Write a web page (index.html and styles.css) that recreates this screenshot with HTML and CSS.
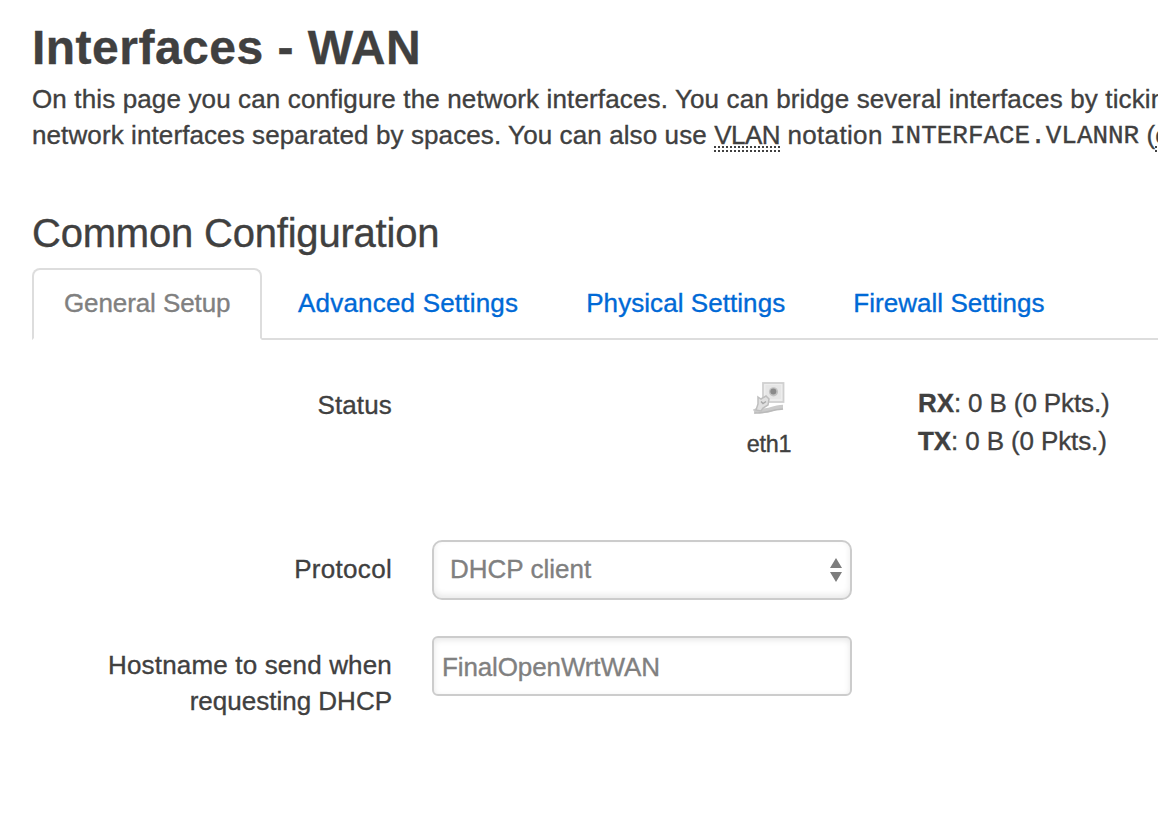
FILE: index.html
```html
<!DOCTYPE html>
<html lang="en">
<head>
<meta charset="utf-8">
<title>Interfaces - WAN</title>
<link rel="stylesheet" href="styles.css">
</head>
<body>
<main class="page">
  <h1 class="title">Interfaces - WAN</h1>
  <p class="intro">
    <span class="intro-line intro-first">On this page you can configure the network interfaces. You can bridge several interfaces by tickin</span>
    <span class="intro-line intro-second">network interfaces separated by spaces. You can also use <span class="abbr">VLAN</span> <span class="word">notation</span> <code class="code">INTERFACE.VLANNR</code> (<span class="abbr">e</span></span>
  </p>
  <h2 class="section-title">Common Configuration</h2>
  <ul class="tabs">
    <li class="tab tab-active">General Setup</li>
    <li class="tab tab-advanced">Advanced Settings</li>
    <li class="tab tab-physical">Physical Settings</li>
    <li class="tab tab-firewall">Firewall Settings</li>
  </ul>
  <div class="row row-status">
    <div class="label">Status</div>
    <div class="status">
      <div class="device">
        <svg class="device-icon" width="32" height="34" viewBox="0 0 32 34">
          <rect x="10" y="3" width="20.500" height="19" fill="#ededed" stroke="#d0d0d0" stroke-width="1.800"/>
          <rect x="12.500" y="5" width="15.500" height="14" fill="#e6e6e6"/>
          <circle cx="20.500" cy="11.800" r="4.600" fill="#c2c2c2"/>
          <circle cx="20.300" cy="11.400" r="3" fill="#8a8a8a"/>
          <path d="M1 31.500C7 28 10 32 16 30S25 27 30 27" fill="none" stroke="#cbcbcb" stroke-width="4.500"/>
          <path d="M1 33C8 33.500 14 32 20 30.500S26 30 30 29" fill="none" stroke="#bababa" stroke-width="1.500"/>
          <path d="M5 17l3 2 5-3 3 3-1 6-5 3-2 3-5-1 2-6z" fill="#e0e0e0" stroke="#bebebe" stroke-width="1.500"/>
          <path d="M8 21.500l2 2 3-2" fill="none" stroke="#a8a8a8" stroke-width="1.500"/>
        </svg>
        <span class="device-name">eth1</span>
      </div>
      <div class="traffic">
        <div class="traffic-line"><b>RX</b>: 0 B (0 Pkts.)</div>
        <div class="traffic-line"><b>TX</b>: 0 B (0 Pkts.)</div>
      </div>
    </div>
  </div>
  <div class="row row-protocol">
    <div class="label">Protocol</div>
    <div class="field select">
      <span>DHCP client</span>
      <svg class="arrows" width="12" height="24" viewBox="0 0 12 24"><path d="M0 10L6 0l6 10zM0 14h12L6 24z" fill="#7d7d7d"/></svg>
    </div>
  </div>
  <div class="row row-host">
    <div class="label"><span class="label-first">Hostname to send when</span><br>requesting DHCP</div>
    <div class="field input">FinalOpenWrtWAN</div>
  </div>
</main>
</body>
</html>
```
FILE: styles.css
```css
* { box-sizing: border-box; }
body {
  margin: 0;
  background: #fff;
  color: #404040;
  font-family: "Liberation Sans", Arial, sans-serif;
  font-size: 26px;
  line-height: 36px;
  overflow: hidden;
  -webkit-text-stroke: .35px currentColor;
}
.page {
  height: 818px;
  padding: 13px 0 0 32px;
  overflow: hidden;
  white-space: nowrap;
}
.title { margin: 0; font-size: 48px; line-height: 70px; letter-spacing: .48px; }
.intro { margin: -2px 0 0; }
.intro-line { display: block; height: 36px; }
.intro-first { letter-spacing: .135px; }
.intro-second { letter-spacing: .1px; }
.word { letter-spacing: .35px; }
.abbr {
  letter-spacing: -.5px;
  border-bottom: 2px dotted #404040;
  text-decoration: underline dotted 2px #404040;
  text-decoration-skip-ink: none;
  text-underline-offset: 2px;
}
.code {
  font-family: "Liberation Mono", monospace;
  font-size: 26px;
  line-height: 1;
  letter-spacing: -.03px;
  vertical-align: 1px;
}
.section-title { margin: 44px 0 0; font-size: 40px; font-weight: 400; line-height: 72px; letter-spacing: -.2px; }
.tabs {
  display: flex;
  gap: 4px;
  margin: -1px 0 0;
  padding: 0;
  height: 72px;
  list-style: none;
  border-bottom: 2px solid #ddd;
}
.tab {
  height: 72px;
  padding: 15px 30px 0;
  border: 2px solid transparent;
  color: #0069d6;
}
.tab-active {
  width: 230px;
  background: #fff;
  color: #808080;
  border-color: #ddd;
  border-bottom-color: #fff;
  border-radius: 8px 8px 0 0;
  letter-spacing: -.1px;
}
.tab-advanced { letter-spacing: .2px; }
.tab-physical { letter-spacing: .06px; }
.tab-firewall { letter-spacing: .04px; }
.row { display: flex; gap: 40px; }
.label { width: 360px; text-align: right; }
.row-status { height: 164px; margin-top: 36px; padding-top: 11px; }
.row-status .label { letter-spacing: .15px; }
.status { display: flex; }
.device {
  display: flex;
  flex-direction: column;
  align-items: center;
  width: 62px;
  margin: -7px 0 0 306px;
}
.device-name { margin-top: 12px; font-size: 23.4px; letter-spacing: -.2px; }
.traffic { margin: -3px 0 0 118px; line-height: 38px; letter-spacing: -.12px; }
.row-protocol { height: 96px; }
.row-protocol .label, .row-host .label { padding-top: 11px; }
.row-protocol .label { letter-spacing: .3px; }
.label-first { letter-spacing: .17px; }
.field {
  display: flex;
  align-items: center;
  width: 420px;
  height: 60px;
  border: 2px solid #ccc;
  color: #808080;
}
.select {
  justify-content: space-between;
  padding: 0 8px 2px 16px;
  border-radius: 10px;
  box-shadow: inset 0 -3px 6px rgba(0, 0, 0, .09);
}
.arrows { position: relative; top: 1px; }
.input {
  padding: 2px 8px 0;
  border-radius: 6px;
  box-shadow: inset 0 2px 6px rgba(0, 0, 0, .1);
  letter-spacing: -.12px;
}
```
